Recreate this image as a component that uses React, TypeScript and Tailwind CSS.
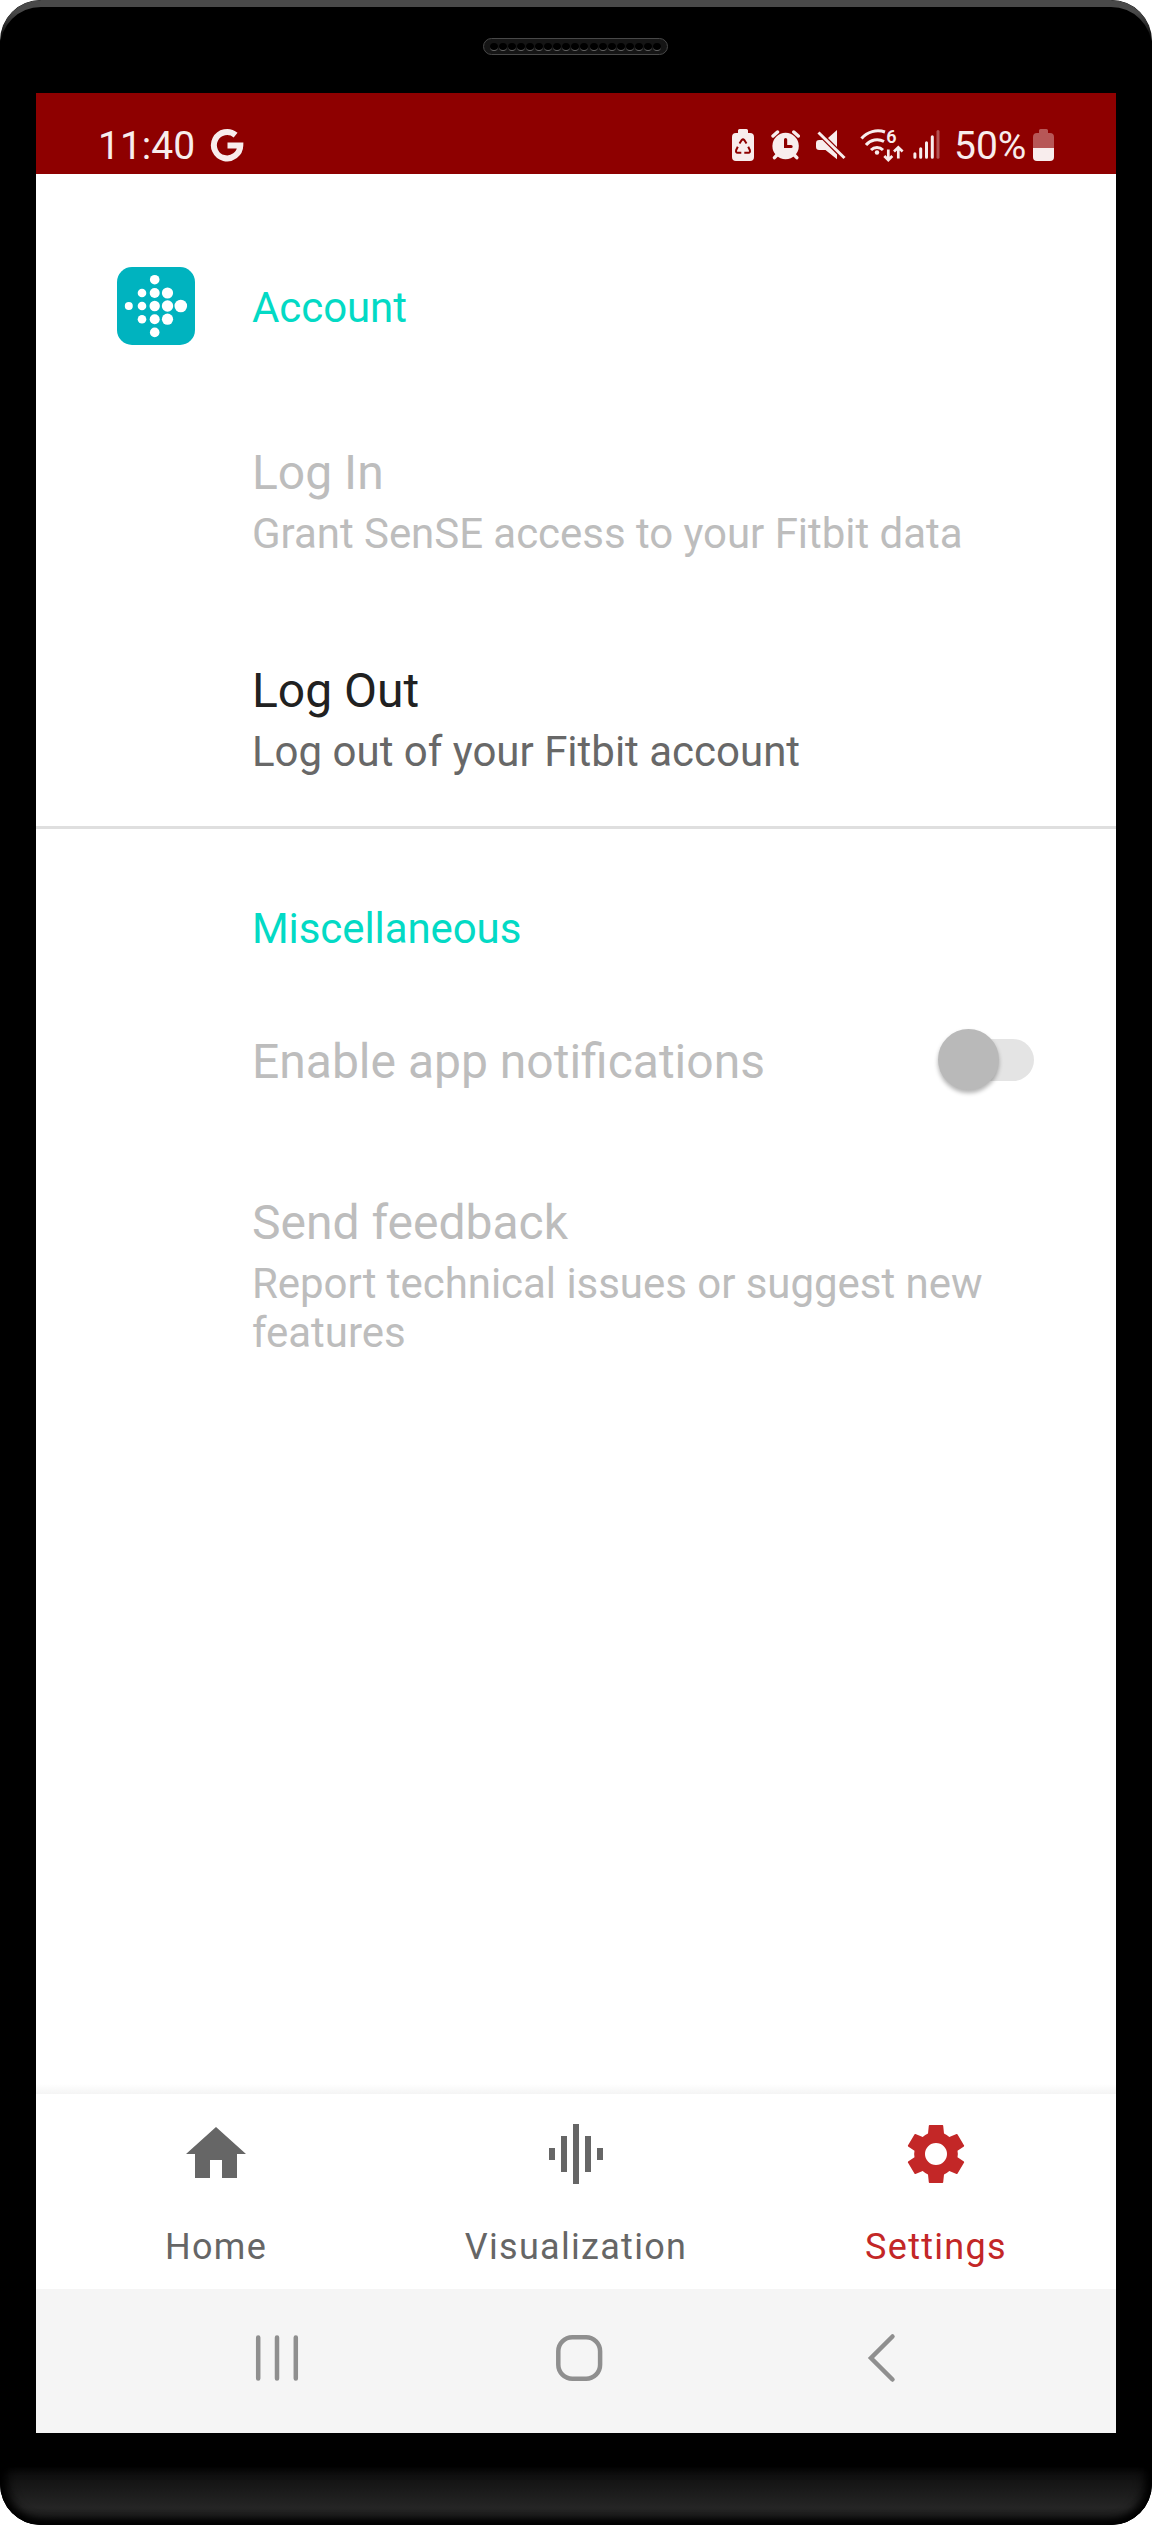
import React from "react";

const LIGHT = "#f8eded";

function GoogleGlyph() {
  return (
    <svg className="ml-[17px] h-[34px] w-[34px]" viewBox="210 128 34 34" fill="none">
      <path d="M235.6 135.1A13.2 13.2 0 1 0 240.3 145.5H227.5" stroke={LIGHT} strokeWidth="6" />
    </svg>
  );
}

function StatusBar() {
  return (
    <header className="flex h-[81px] items-start bg-[#8e0000] pt-[35px] text-[39px] leading-[36px] text-[#f8eded]">
      <span className="ml-[62px] w-[95px] whitespace-nowrap">11:40</span>
      <GoogleGlyph />
      <svg className="ml-[488px] h-[34px] w-[22px]" viewBox="732 128 22 34">
        <path
          d="M738 130.5q0-1.5 1.500-1.500h7q1.500 0 1.500 1.500v2.500h2q4 0 4 4v20q0 4-4 4h-14q-4 0-4-4v-20q0-4 4-4h2z"
          fill={LIGHT}
        />
        <g stroke="#8e0000" strokeWidth="2" fill="none">
          <path d="M739.500 143.500l2.300-3.500q1.200-1.200 2.400 0l2.300 3.500" />
          <path d="M737.800 146.800l-1.600 3.200q-.8 2.500 1.500 2.700h3.600" />
          <path d="M748.200 146.800l1.600 3.200q.8 2.500-1.500 2.700h-4" />
        </g>
      </svg>
      <svg className="ml-[17px] h-[34px] w-[29px]" viewBox="771 128 29 34">
        <circle cx="785.600" cy="146" r="13.200" fill={LIGHT} />
        <path
          d="M773 136l4.500-4M798.300 136l-4.500-4M777 155l-2.500 2.700M794.300 155l2.500 2.700"
          stroke={LIGHT}
          strokeWidth="3.400"
          strokeLinecap="round"
        />
        <path d="M785.600 139.500v7h5.500" stroke="#8e0000" strokeWidth="3.200" strokeLinecap="round" fill="none" />
      </svg>
      <svg className="ml-[16px] h-[34px] w-[30px]" viewBox="816 128 30 34">
        <path d="M816 143.200q0-3.200 3.200-3.200h3.300l14.500 14.500v4.800L825.500 150h-6.300q-3.200 0-3.200-3.200z" fill={LIGHT} />
        <path d="M828 138l9-8v17z" fill={LIGHT} />
        <path d="M818.500 132.500l26 25.500" stroke={LIGHT} strokeWidth="3" />
      </svg>
      <svg className="ml-[14px] h-[34px] w-[44px] overflow-visible" viewBox="860 128 44 34">
        <g fill="none" stroke={LIGHT} strokeWidth="3">
          <path d="M861.500 138.500A21.500 21.500 0 0 1 885 132" />
          <path d="M866 145A14.500 14.500 0 0 1 884 141.500" />
          <path d="M871 150A8.500 8.500 0 0 1 883 150" />
        </g>
        <circle cx="877" cy="152.500" r="2.200" fill={LIGHT} />
        <text x="886.200" y="143" fontSize="18" fontWeight="600" fontFamily="Roboto" fill={LIGHT}>
          6
        </text>
        <path
          d="M888.300 149.500v10.500M884.300 156l4 4 4-4M898.300 158.500v-11M894 151.500l4.300-4.200 4.300 4.200"
          stroke={LIGHT}
          strokeWidth="2.700"
          fill="none"
        />
      </svg>
      <svg className="ml-[9px] h-[34px] w-[27px]" viewBox="913 128 27 34" stroke={LIGHT} strokeWidth="3" strokeLinecap="round">
        <path d="M914.900 153.800v3.500M920.700 148.800v8.500M926.500 142.800v14.500M932.300 136.800v20.500" />
        <path d="M938 131.500v25.800" opacity="0.350" />
      </svg>
      <span className="ml-[14px] w-[75px] whitespace-nowrap">50%</span>
      <svg className="ml-[4px] h-[34px] w-[21px]" viewBox="1033 128 21 34">
        <path
          d="M1039 130.500q0-1.500 1.500-1.500h6q1.500 0 1.500 1.500v2.500h2q4 0 4 4v11h-21v-11q0-4 4-4h2z"
          fill="#b75757"
        />
        <path d="M1033 148h21v9q0 4-4 4h-13q-4 0-4-4z" fill={LIGHT} />
      </svg>
    </header>
  );
}

const DOTS: [number, number, number][] = [
  [37.7, 12.7, 4.8],
  [25, 26, 4.3], [37.7, 26, 5], [50.5, 26, 5.6],
  [11.8, 39, 4], [25, 39, 4.3], [37.7, 39, 5.2], [50.5, 39, 5.7], [63.8, 39, 6.3],
  [25, 52.2, 4.3], [37.7, 52.2, 5], [50.5, 52.2, 5.6],
  [37.7, 65.4, 4.8],
];

function FitbitLogo() {
  return (
    <svg className="ml-[81px] h-[78px] w-[78px]" viewBox="0 0 78 78">
      <rect width="78" height="78" rx="15" fill="#00b3bf" />
      {DOTS.map(([x, y, r], i) => (
        <circle key={i} cx={x} cy={y} r={r} fill="#fff" />
      ))}
    </svg>
  );
}

function Preference({ title, summary, enabled }: { title: string; summary: string; enabled?: boolean }) {
  return (
    <section className={enabled ? "text-[#212121]" : "text-[#bdbdbd]"}>
      <h3 className="text-[48px] leading-[56px]">{title}</h3>
      <p
        className={
          enabled
            ? "mt-2 text-[42px] leading-[49px] text-[#686868]"
            : "mt-2 text-[42px] leading-[49px] tracking-[-0.04px]"
        }
      >
        {summary}
      </p>
    </section>
  );
}

function Tab({ label, d, active }: { label: string; d: string; active?: boolean }) {
  return (
    <button
      className={
        active
          ? "flex flex-1 flex-col items-center pt-6 text-[#c32727]"
          : "flex flex-1 flex-col items-center pt-6 text-[#666666]"
      }
    >
      <svg className="h-[72px] w-[72px]" viewBox="0 0 72 72" fill="currentColor" fillRule="evenodd">
        <path d={d} />
      </svg>
      <span className="mt-[36px] text-[36px] leading-[42px] tracking-[1.3px]">{label}</span>
    </button>
  );
}

const HOME = "M30 60V42h12v18h15V36h9L36 9 6 36h9v24z";
const BARS = "M21 54h6V18h-6zM33 66h6V6h-6zM9 42h6V30H9zM45 54h6V18h-6zM57 30v12h6V30z";
const GEAR =
  "M29.500 7h13q.6 0 .7.700L44 15.500q2.800 1.300 5.300 3.400l7.200-2.900q.6-.2.900.3l6.700 11.200q.2.500-.2.900L57.500 32.700q.7 3.300 0 6.600l6.400 4.300q.4.400.2.900l-6.700 11.200q-.3.500-.9.300l-7.200-2.900q-2.500 2.100-5.300 3.400l-.8 7.800q-.1.700-.7.700h-13q-.6 0-.7-.7L28 56.500q-2.800-1.300-5.300-3.400L15.500 56q-.6.200-.9-.3L7.900 44.500q-.2-.5.200-.9l6.400-4.300q-.7-3.300 0-6.600L8.100 28.400q-.4-.4-.2-.9l6.700-11.200q.3-.5.900-.3l7.200 2.900q2.500-2.100 5.300-3.400l.8-7.800q.1-.7.700-.7zM36 25a11 11 0 1 0 0 22a11 11 0 1 0 0-22z";

function SystemNav() {
  return (
    <div className="flex h-[144px] items-center bg-[#f5f5f5] pb-[6px]">
      <svg className="ml-[219px] h-[48px] w-[44px]" viewBox="0 0 44 48" stroke="#8f8f8f" strokeWidth="4.500" strokeLinecap="round">
        <path d="M3.200 3.500v41M22 3.500v41M40.800 3.500v41" />
      </svg>
      <svg className="ml-[256px] h-[48px] w-[48px]" viewBox="0 0 48 48" fill="none" stroke="#8f8f8f" strokeWidth="4.500">
        <rect x="3.300" y="3.300" width="41.800" height="41.400" rx="14" />
      </svg>
      <svg className="ml-[263px] h-[50px] w-[30px]" viewBox="0 0 30 50" fill="none" stroke="#8f8f8f" strokeWidth="4.500" strokeLinecap="round">
        <path d="M26.500 3.500L5 25l21.500 21.500" />
      </svg>
    </div>
  );
}

function Speaker() {
  return (
    <div className="mt-[38px] ml-[483px] flex h-[17px] w-[185px] items-center justify-between rounded-full border border-[#484848] bg-[#151515] px-[6px] pt-px">
      {Array.from({ length: 19 }, (_, i) => (
        <i key={i} className="size-[8px] rounded-full border-b border-[#666] bg-black" />
      ))}
    </div>
  );
}

export default function App() {
  return (
    <div className="bg-white font-[Roboto,sans-serif]">
      <div className="relative flex h-[2525px] w-[1152px] flex-col overflow-hidden rounded-[41px] bg-black">
        <div className="absolute inset-0 rounded-[41px] [mask-image:linear-gradient(black_12px,transparent_42px)]">
          <div className="h-full rounded-[41px] shadow-[inset_0_7px_0_#494949]" />
        </div>
        <div className="absolute inset-x-0 bottom-0 h-[58px] rounded-b-[41px] bg-linear-to-b from-[#0c0c0c] via-[#252525] via-70% to-[#181818] shadow-[inset_0_-7px_9px_-2px_#000,inset_7px_0_11px_#000,inset_-7px_0_11px_#000]" />
        <div className="h-[93px] shrink-0">
          <Speaker />
        </div>
        <div className="mx-[36px] flex h-[2340px] flex-col bg-white">
          <StatusBar />
          <main className="flex-1">
            <div className="flex h-[271px] items-start pt-[93px]">
              <FitbitLogo />
              <h2 className="mt-[16px] ml-[57px] text-[42px] leading-[49px] tracking-[-0.08px] text-[#03dac5]">Account</h2>
            </div>
            <div className="flex h-[381px] flex-col gap-[105px] pl-[216px]">
              <Preference title="Log In" summary="Grant SenSE access to your Fitbit data" />
              <Preference title="Log Out" summary="Log out of your Fitbit account" enabled />
            </div>
            <hr className="h-[3px] border-0 bg-[#dfdfdf]" />
            <div className="pt-[75px] pr-[96px] pl-[216px]">
              <h2 className="text-[42px] leading-[49px] tracking-[-0.08px] text-[#03dac5]">Miscellaneous</h2>
              <div className="-mr-[14px] mt-[76px] mb-[101px] flex h-[65px] items-center justify-between text-[#bdbdbd]">
                <h3 className="text-[48px] leading-[56px]">Enable app notifications</h3>
                <div className="mb-[4px] flex h-[42px] w-[90px] items-center rounded-full bg-[#e4e4e4]">
                  <div className="-ml-[6px] size-[61px] shrink-0 rounded-full bg-[#b9b9b9] shadow-[0_3px_4px_rgba(0,0,0,0.3)]" />
                </div>
              </div>
              <Preference title="Send feedback" summary="Report technical issues or suggest new features" />
            </div>
          </main>
          <div className="h-[10px] bg-linear-to-b from-white to-[#f4f4f4]" />
          <nav className="flex h-[195px] bg-white">
            <Tab label="Home" d={HOME} />
            <Tab label="Visualization" d={BARS} />
            <Tab label="Settings" d={GEAR} active />
          </nav>
          <SystemNav />
        </div>
      </div>
    </div>
  );
}
